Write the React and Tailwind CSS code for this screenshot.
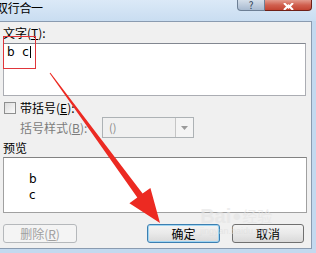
import React from "react";

const cjk = { fontFamily: '"Noto Sans CJK SC", "Noto Sans", sans-serif' };

function Btn({ children, primary, disabled, className = "" }) {
  // Win7 push button
  const border = disabled
    ? "border-[#b5b8bb]"
    : primary
    ? "border-[#3c7fb1] shadow-[inset_0_0_0_1px_#9fd5f2]"
    : "border-[#707070]";
  return (
    <div
      className={`h-[19px] rounded-[3px] border flex items-center justify-center text-[12px] leading-none ${border} ${
        disabled
          ? "bg-[#f4f4f4] text-[#a0a0a0]"
          : "bg-gradient-to-b from-[#f4f4f4] via-[#e9e9e9] to-[#d9d9d9] text-black"
      } ${className}`}
    >
      {children}
    </div>
  );
}

export default function App() {
  return (
    <div
      className="relative w-[316px] h-[253px] overflow-hidden bg-[#c3d9ef] flex flex-col"
      style={cjk}
    >
      {/* Title bar */}
      <div className="h-[21px] shrink-0 flex items-start bg-gradient-to-b from-[#dbe9f7] to-[#c9ddf1]">
        <div className="ml-[-4px] mt-[1px] text-[12px] leading-[13px] text-black tracking-[-0.3px]">
          双行合一
        </div>
        <div className="ml-auto mr-[4px] flex h-[11px]">
          <div className="w-[28px] h-[11px] rounded-bl-[4px] border border-t-0 border-[#6d7f95] bg-gradient-to-b from-[#d5dfea] to-[#a8bad0] flex items-end justify-center">
            <span className="text-[10px] leading-[10px] text-[#2e3f56]">?</span>
          </div>
          <div className="w-[47px] h-[11px] rounded-br-[4px] border border-l-0 border-t-0 border-[#6e2018] bg-gradient-to-b from-[#e29a8d] via-[#d0604f] to-[#c34331] flex items-end justify-center">
            <svg width="11" height="7" viewBox="0 0 11 7">
              <path d="M1 0 L5.5 4.5 L10 0 M1 7 L5.5 2.5 L10 7" stroke="#fff" strokeWidth="2" fill="none" />
            </svg>
          </div>
        </div>
      </div>

      {/* Dialog body */}
      <div className="mr-[4px] h-[228px] shrink-0 border border-l-0 border-[#8a9bb0] bg-[#f0f0f0] pl-[3px] pr-[5px] text-[12px] text-black">
        <div className="mt-[4px] h-[14px] leading-[14px]">
          文字(<span className="underline">T</span>):
        </div>
        <div className="mt-[3px] h-[53px] w-[303px] border border-[#abadb3] border-t-[#828790] bg-white px-[3px] pt-[1px]">
          <div className="flex items-center h-[14px] text-[12px] leading-[14px]" style={{ fontFamily: '"DejaVu Sans", sans-serif' }}>
            <span className="whitespace-pre">b  c</span>
            <span className="ml-[1px] w-px h-[12px] bg-black" />
          </div>
        </div>

        <div className="mt-[4px] h-[15px] flex items-center">
          <div className="ml-[1px] w-[12px] h-[12px] border border-[#8e8f8f] bg-gradient-to-br from-[#dcdcdc] to-[#fbfbfb]" />
          <span className="ml-[4px] leading-[14px]">
            带括号(<span className="underline">E</span>):
          </span>
        </div>

        <div className="mt-[2px] h-[21px] flex items-center">
          <span className="ml-[17px] w-[82px] leading-[14px] text-[#7c7c7c]">
            括号样式(<span className="underline">B</span>):
          </span>
          <div className="w-[92px] h-[21px] flex border border-[#adb2b5] bg-[#f0f0f0]">
            <div className="flex-1 flex items-center pl-[6px] text-[#8a8a8a] text-[11px]">()</div>
            <div className="w-[18px] h-full border-l border-[#c5c5c5] flex items-center justify-center bg-[#f4f4f4]">
              <svg width="7" height="4" viewBox="0 0 7 4">
                <path d="M0 0 H7 L3.5 4 Z" fill="#9a9a9a" />
              </svg>
            </div>
          </div>
        </div>

        <div className="mt-[3px] h-[14px] leading-[14px]">预览</div>
        <div className="mt-[2px] h-[56px] w-[304px] border border-[#a0a0a0] border-t-[#828282] bg-white pl-[25px] pt-[13px]">
          <div className="leading-[16px] text-[12px]" style={{ fontFamily: '"DejaVu Sans", sans-serif' }}>
            <div>b</div>
            <div>c</div>
          </div>
        </div>

        <div className="mt-[11px] flex">
          <Btn disabled className="w-[74px]">
            删除(<span className="underline">R</span>)
          </Btn>
          <Btn primary className="ml-[70px] w-[73px]">
            确定
          </Btn>
          <Btn className="ml-[12px] w-[72px]">取消</Btn>
        </div>
      </div>

      {/* Baidu watermark */}
      <div className="absolute left-[200px] top-[206px] flex flex-col items-center pointer-events-none opacity-60">
        <div className="flex items-end text-[20px] leading-[20px] font-bold text-[#e4e4e4]" style={{ fontFamily: '"Liberation Sans", sans-serif' }}>
          <span>Bai</span>
          <span className="mx-[1px] text-[15px]">●</span>
          <span className="text-[15px] font-normal" style={cjk}>经验</span>
        </div>
        <div className="text-[9px] leading-[10px] text-[#dedede]" style={{ fontFamily: '"Liberation Sans", sans-serif' }}>
          jingyan.baidu.com
        </div>
      </div>

      {/* Red annotation box */}
      <div className="absolute left-[3px] top-[36px] w-[33px] h-[33px] border border-[#e0353a] pointer-events-none" />

      {/* Red arrow */}
      <svg className="absolute inset-0 pointer-events-none" width="316" height="253" viewBox="0 0 316 253">
        <polygon
          points="50.4,72.7 142.6,193.6 150.4,187.9 160,223 129.4,203.3 137.3,197.5 49.6,73.3"
          fill="#ec2a22"
        />
      </svg>
    </div>
  );
}
